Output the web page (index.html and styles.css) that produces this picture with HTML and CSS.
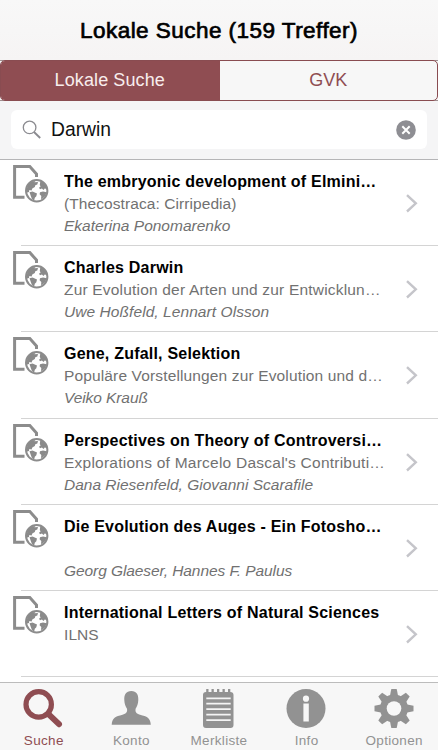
FILE: index.html
```html
<!DOCTYPE html>
<html lang="de">
<head>
<meta charset="utf-8">
<title>Lokale Suche</title>
<link rel="stylesheet" href="styles.css">
</head>
<body>
<svg class="defs" width="0" height="0">
  <symbol id="doc" viewBox="0 0 38 40">
    <path d="M12.500 33.200H2.600V2.600H17.800L24.500 10V13" fill="none" stroke="#8c8c8c" stroke-width="3"/>
    <circle cx="24.700" cy="26.800" r="10.700" fill="#fff" stroke="#8c8c8c" stroke-width="2"/>
    <path fill="#8a8a8a" d="M14.500 25.500L16 21L19 18L23 16.700L22.500 18.300L26 18L25.300 20.500L23.300 21.200L22.800 23L20.300 24.500L19.600 26.500L17.300 26L17 28L15 28.500Z M17.500 28.300L20.500 27.600L25 29.600L24.300 32.200L22.800 33.800L22.200 36.500L20 35.200L18.800 32Z M28.300 17L31.500 19L34.300 22.500L35 25L32.700 24.400L31.500 26L29.900 24.500L28 25.200L27 23.700L28.600 22.400L27.800 21Z M28 28.200L31 27.400L34.500 28.300L33.500 31.400L30.800 34.600L29 35L29.300 31.900L27.600 30.300Z"/>
  </symbol>
  <symbol id="chev" viewBox="0 0 14 20"><path d="M2 2.100L10.800 10.300L2 18.500" fill="none" stroke="#c5c5ca" stroke-width="2.4"/></symbol>
</svg>
<div class="app">
  <header class="nav"><h1>Lokale Suche (159 Treffer)</h1></header>
  <div class="tabs-wrap">
    <div class="tabs">
      <div class="tab active"><span>Lokale Suche</span></div>
      <div class="tab"><span>GVK</span></div>
    </div>
  </div>
  <div class="searchbar">
    <div class="field">
      <svg width="20" height="20" viewBox="0 0 20 20"><circle cx="7.6" cy="7.4" r="6.3" fill="none" stroke="#8b8b90" stroke-width="1.3"/><path d="M12 12L18.2 18" stroke="#8b8b90" stroke-width="1.9"/></svg>
      <span class="query">Darwin</span>
      <svg class="clear" width="20" height="20" viewBox="0 0 20 20"><circle cx="10" cy="10" r="9.8" fill="#8e8e93"/><path d="M6.3 6.3L13.7 13.7M13.7 6.3L6.3 13.7" stroke="#fff" stroke-width="2"/></svg>
    </div>
  </div>
  <main class="list">
    <article class="row"><svg class="doc"><use href="#doc"/></svg><div class="text"><h2>The embryonic development of Elmini…</h2><p class="snug">(Thecostraca: Cirripedia)</p><p class="author level">Ekaterina Ponomarenko</p></div><svg class="chev"><use href="#chev"/></svg></article>
    <article class="row"><svg class="doc"><use href="#doc"/></svg><div class="text"><h2>Charles Darwin</h2><p>Zur Evolution der Arten und zur Entwicklun…</p><p class="author loose">Uwe Hoßfeld, Lennart Olsson</p></div><svg class="chev"><use href="#chev"/></svg></article>
    <article class="row"><svg class="doc"><use href="#doc"/></svg><div class="text"><h2>Gene, Zufall, Selektion</h2><p class="mid">Populäre Vorstellungen zur Evolution und d…</p><p class="author">Veiko Krauß</p></div><svg class="chev"><use href="#chev"/></svg></article>
    <article class="row"><svg class="doc"><use href="#doc"/></svg><div class="text"><h2>Perspectives on Theory of Controversi…</h2><p class="wide">Explorations of Marcelo Dascal's Contributi…</p><p class="author level">Dana Riesenfeld, Giovanni Scarafile</p></div><svg class="chev"><use href="#chev"/></svg></article>
    <article class="row"><svg class="doc"><use href="#doc"/></svg><div class="text"><h2>Die Evolution des Auges - Ein Fotosho…</h2><p></p><p class="author">Georg Glaeser, Hannes F. Paulus</p></div><svg class="chev"><use href="#chev"/></svg></article>
    <article class="row"><svg class="doc"><use href="#doc"/></svg><div class="text"><h2>International Letters of Natural Sciences</h2><p class="snug">ILNS</p><p></p></div><svg class="chev"><use href="#chev"/></svg></article>
  </main>
  <footer class="bar">
    <div class="item active"><svg width="40" height="40" viewBox="0 0 40 40"><circle cx="15.7" cy="16.4" r="12.7" fill="none" stroke="currentColor" stroke-width="5.2"/><path d="M26 26.6L36 36.2" stroke="currentColor" stroke-width="6" stroke-linecap="round"/></svg><span>Suche</span></div>
    <div class="item"><svg width="40" height="40" viewBox="0 0 40 40"><path fill="currentColor" d="M20.3 3C25.5 3 27.6 6.500 27.300 12C27.200 16 26 18.500 24.600 20.800C24.100 24.300 25.200 25.500 29 26.800C36 28.700 39.300 29.500 39.800 36.800H.7C1.200 29.500 4.500 28.700 11.500 26.800C15.400 25.500 16.500 24.300 16 20.800C14.600 18.500 13.400 16 13.300 12C13 6.500 15.100 3 20.300 3Z"/></svg><span>Konto</span></div>
    <div class="item"><svg width="40" height="40" viewBox="0 0 40 40"><path fill="currentColor" d="M8 4H8.200V1H10.500V4H13.500V1H15.800V4H19V1H21.300V4H24.500V1H26.800V4H30V1H32.300V4Q35.500 4 35.500 7V37Q35.500 40 32.500 40H8Q5 40 5 37V7Q5 4 8 4Z"/><path d="M8.300 10.300H32.700M8.300 15.700H32.700M8.300 21.200H32.700M8.300 26.700H32.700M8.300 32.200H32.700" stroke="#f4f4f4" stroke-width="1.800"/></svg><span>Merkliste</span></div>
    <div class="item"><svg width="40" height="40" viewBox="0 0 40 40"><circle cx="20" cy="20.500" r="19.500" fill="currentColor"/><circle cx="20" cy="10.700" r="3.100" fill="#f7f7f7"/><path d="M17.400 15.500H22.800V33.500H17.400Z" fill="#f7f7f7"/></svg><span>Info</span></div>
    <div class="item"><svg width="40" height="40" viewBox="0 0 40 40"><g fill="currentColor"><path id="tooth" d="M17.300 1H22.700L24.200 8.500V32.500L22.700 40H17.300L15.800 32.500V8.500Z"/><use href="#tooth" transform="rotate(45 20 20.500)"/><use href="#tooth" transform="rotate(90 20 20.500)"/><use href="#tooth" transform="rotate(135 20 20.500)"/><circle cx="20" cy="20.500" r="14"/></g><circle cx="20" cy="20.500" r="7.300" fill="#f7f7f7"/></svg><span>Optionen</span></div>
  </footer>
</div>
</body>
</html>
```

FILE: styles.css
```css
* { box-sizing: border-box; }
body { margin: 0; background: #fff; font-family: "Liberation Sans", Arial, sans-serif; }
h1, h2, p { margin: 0; font-weight: normal; }
.defs { display: block; }
svg { flex: none; }
.app { width: 438px; height: 750px; display: flex; flex-direction: column; overflow: hidden; }
.nav { height: 60px; background: linear-gradient(#f8f8f8, #f6f4f4); text-align: center; }
.nav h1 { font-size: 22.500px; letter-spacing: .46px; line-height: 62px; color: #000; -webkit-text-stroke: .7px #000; white-space: nowrap; }
.tabs-wrap { height: 41px; background: linear-gradient(#a09091, #a09091) 0 0 / 100% 1px no-repeat, linear-gradient(#a09091, #a09091) 0 100% / 100% 1px no-repeat, #f7f7f7; }
.tabs { height: 41px; display: flex; border: 1.500px solid #894c51; border-radius: 5px; background: #f7f7f7; overflow: hidden; }
.tab { flex: 1; display: flex; align-items: center; justify-content: center; font-size: 18px; color: #8f4d52; }
.tab.active { background: #8f4d52; color: #f8eded; letter-spacing: .1px; padding-right: 1px; }
.searchbar { height: 59px; padding: 9px 11px 0; background: #f5f5f6; border-bottom: 1px solid #b5b5b7; }
.field { height: 39px; border-radius: 6px; background: #fff; display: flex; align-items: center; padding: 0 11px 0 11px; }
.query { margin-left: 9px; font-size: 19.300px; line-height: 38px; color: #111; }
.clear { margin-left: auto; }
.list { flex: 1; min-height: 0; }
.row { height: 86.200px; display: flex; background: linear-gradient(#d4d4d4, #d4d4d4) 21px 100% / 100% 1px no-repeat; }
.doc { width: 38px; height: 40px; margin: 4px 0 0 12px; }
.text { width: 330px; margin: 13px 0 0 14px; white-space: nowrap; }
.text h2, .text p { height: 16.500px; margin-bottom: 5.500px; overflow: hidden; font-size: 16px; line-height: 17px; color: #000; }
.text h2 { font-weight: bold; letter-spacing: .21px; }
.text p { height: 17px; margin-bottom: 5px; font-size: 15.500px; letter-spacing: .19px; color: #717171; }
.text .snug { letter-spacing: .08px; }
.text .mid { letter-spacing: .14px; }
.text .wide { letter-spacing: .24px; }
.text .author { height: 19px; font-style: italic; letter-spacing: -.08px; }
.text .loose { letter-spacing: .07px; }
.text .level { letter-spacing: 0; }
.chev { width: 14px; height: 20px; margin: 33px 0 0 11px; }
.bar { height: 68px; display: flex; background: #f7f7f7; border-top: 1px solid #bcbcbc; }
.item { flex: 1; display: flex; flex-direction: column; align-items: center; padding-top: 5px; color: #929292; }
.item svg { margin-left: -1px; }
.item span { font-size: 13.500px; letter-spacing: .32px; line-height: 15px; margin-top: 5px; }
.item.active { color: #8f4d52; }
```
